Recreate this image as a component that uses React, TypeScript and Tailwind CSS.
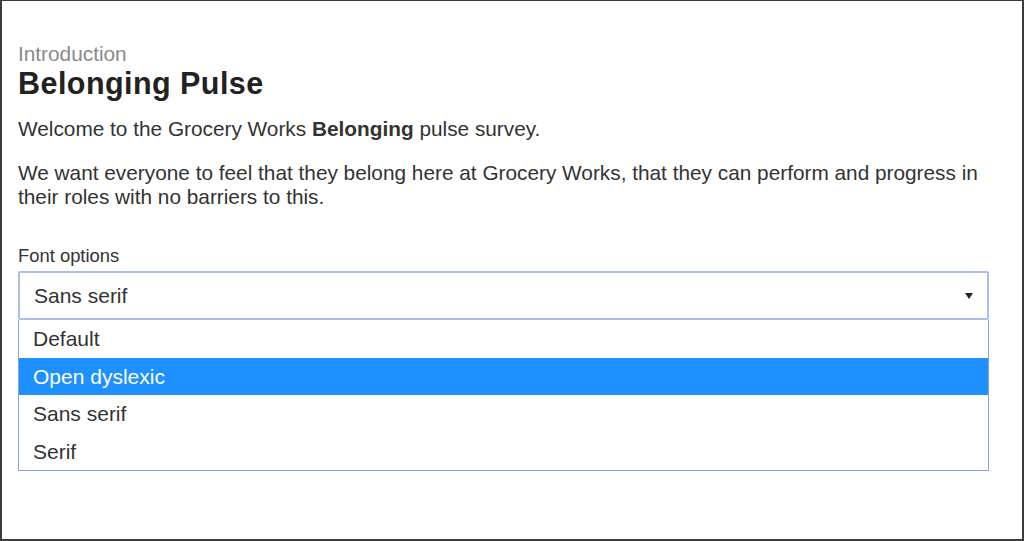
export default function App() {
  const options = ["Default", "Open dyslexic", "Sans serif", "Serif"];
  return (
    <div
      className="w-[1024px] h-[541px] bg-white border border-[#3c3c3c] border-l-2 border-r-2 border-b-2 overflow-hidden text-[#333]"
      style={{ fontFamily: '"Liberation Sans", Arial, sans-serif' }}
    >
      <div className="pl-[16px] pr-[33px] pt-[41px]">
        <div className="text-[20.8px] leading-[24px] text-[#8a8a8a]">Introduction</div>
        <h1 className="text-[30.5px] leading-[34px] font-bold text-[#222] tracking-[0.45px]">Belonging Pulse</h1>
        <p className="mt-[17px] text-[20.8px] leading-[24px]">
          Welcome to the Grocery Works <b>Belonging</b> pulse survey.
        </p>
        <p className="mt-[20px] text-[20.8px] leading-[24px]">
          We want everyone to feel that they belong here at Grocery Works, that they can perform and progress in their roles with no barriers to this.
        </p>
        <div className="mt-[37px] text-[18.4px] leading-[20px] text-[#333]">Font options</div>
        <div className="mt-[5px] relative">
          <div className="h-[49px] border-2 border-[#a9c0ea] rounded-[2px] flex items-center pl-[14px] pr-[12px] text-[21px]">
            <span className="flex-1">Sans serif</span>
            <svg width="8" height="6" viewBox="0 0 8 6" className="mr-[2px]">
              <path d="M0 0 L8 0 L4 6 Z" fill="#222" />
            </svg>
          </div>
          <div className="border border-t-0 border-[#8aa3d6] text-[21px]">
            {options.map((o) => (
              <div
                key={o}
                className={
                  "h-[37.5px] flex items-center pl-[14px] " +
                  (o === "Open dyslexic" ? "bg-[#1e90ff] text-white" : "")
                }
              >
                {o}
              </div>
            ))}
          </div>
        </div>
      </div>
    </div>
  );
}
